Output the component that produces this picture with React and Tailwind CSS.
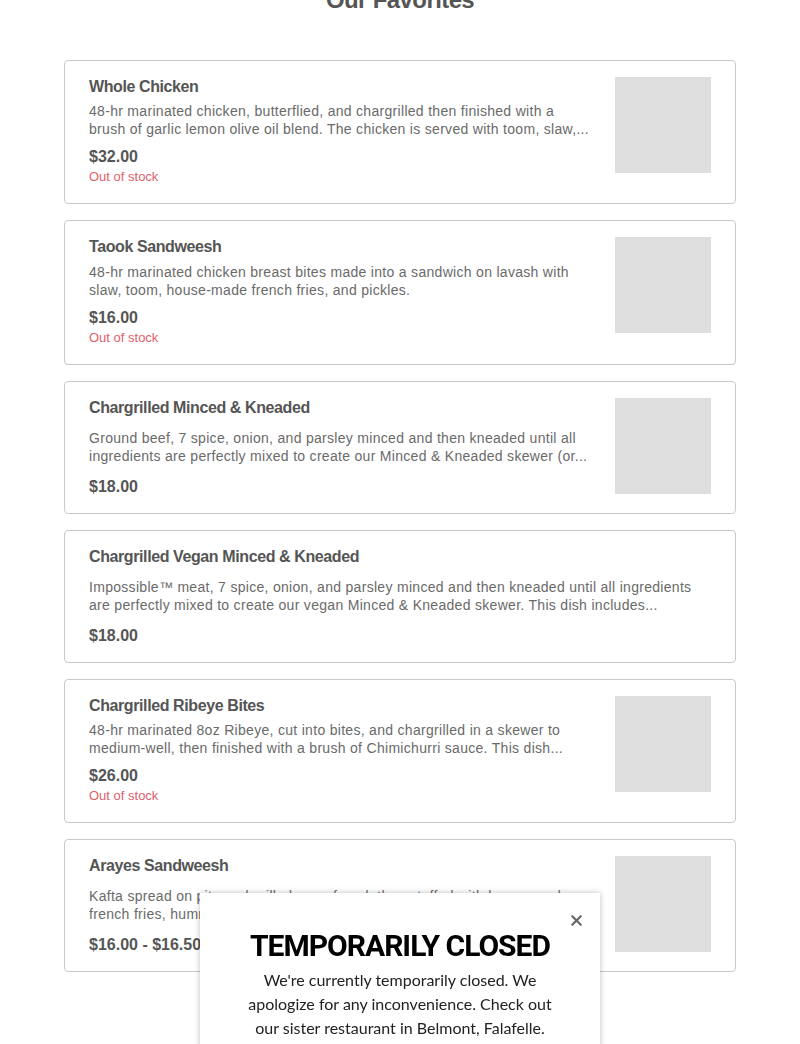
import React from 'react';
import { X } from 'lucide-react';

const items = [
  {
    name: 'Whole Chicken',
    lines: [
      '48-hr marinated chicken, butterflied, and chargrilled then finished with a',
      'brush of garlic lemon olive oil blend. The chicken is served with toom, slaw,...',
    ],
    price: '$32.00',
    outOfStock: true,
    image: true,
  },
  {
    name: 'Taook Sandweesh',
    lines: [
      '48-hr marinated chicken breast bites made into a sandwich on lavash with',
      'slaw, toom, house-made french fries, and pickles.',
    ],
    price: '$16.00',
    outOfStock: true,
    image: true,
    roomy: true,
  },
  {
    name: 'Chargrilled Minced & Kneaded',
    lines: [
      'Ground beef, 7 spice, onion, and parsley minced and then kneaded until all',
      'ingredients are perfectly mixed to create our Minced & Kneaded skewer (or...',
    ],
    price: '$18.00',
    image: true,
  },
  {
    name: 'Chargrilled Vegan Minced & Kneaded',
    lines: [
      'Impossible™ meat, 7 spice, onion, and parsley minced and then kneaded until all ingredients',
      'are perfectly mixed to create our vegan Minced & Kneaded skewer. This dish includes...',
    ],
    price: '$18.00',
    image: false,
  },
  {
    name: 'Chargrilled Ribeye Bites',
    lines: [
      '48-hr marinated 8oz Ribeye, cut into bites, and chargrilled in a skewer to',
      'medium-well, then finished with a brush of Chimichurri sauce. This dish...',
    ],
    price: '$26.00',
    outOfStock: true,
    image: true,
  },
  {
    name: 'Arayes Sandweesh',
    lines: [
      'Kafta spread on pita and grilled open faced, then stuffed with house-made',
      'french fries, hummus, pickles, and toom...',
    ],
    price: '$16.00 - $16.50',
    image: true,
  },
];

const MenuCard = ({ item }) => (
  <div className="flex gap-6 border border-[#c9c9c9] rounded-[4px] bg-white pl-6 pr-6 pt-4 pb-4">
    <div className="flex-1 min-w-0">
      <div className="text-[16px] leading-[20px] font-semibold tracking-[-0.4px] text-[#555]">{item.name}</div>
      <div
        className={`${item.outOfStock ? (item.roomy ? 'mt-[6px]' : 'mt-[5px]') : 'mt-[11px]'} text-[14px] leading-[18px] tracking-[0.3px] text-[#6a6a6a]`}
      >
        {item.lines.map((l, i) => (
          <div key={i} className="whitespace-nowrap">{l}</div>
        ))}
      </div>
      <div className={`${item.outOfStock ? 'mt-[9px]' : 'mt-[12px]'} text-[16px] leading-[20px] font-semibold text-[#555]`}>
        {item.price}
      </div>
      {item.outOfStock && (
        <div className="text-[13px] leading-[19px] text-[#e0606b] pb-[1px]">Out of stock</div>
      )}
    </div>
    {item.image && <div className="w-24 h-24 shrink-0 bg-[#dedede]" />}
  </div>
);

export default function App() {
  return (
    <div className="min-h-screen bg-white font-['Liberation_Sans',Arial,sans-serif]">
      <div className="w-[672px] mx-auto">
        <h2 className="mt-[-16px] mb-[44px] text-center text-[24px] leading-[32px] font-semibold tracking-[-0.6px] text-[#555]">
          Our Favorites
        </h2>
        <div className="flex flex-col gap-4">
          {items.map((it) => (
            <MenuCard key={it.name} item={it} />
          ))}
        </div>
        <div className="h-24" />
      </div>

      <div className="fixed left-[200px] top-[893px] w-[400px] h-[300px] bg-white shadow-[0_0_6px_rgba(0,0,0,0.25)] px-10 pt-[33px] text-center">
        <button className="absolute top-[19px] right-[15px] text-[#666]">
          <X size={17} strokeWidth={3} />
        </button>
        <div className="text-[30px] leading-[40px] font-bold text-black tracking-[-1px] font-['Roboto',sans-serif]">
          TEMPORARILY CLOSED
        </div>
        <p className="mt-[2px] text-[16px] leading-[24px] text-[#222] font-['Lato',sans-serif]">
          We're currently temporarily closed. We apologize for any inconvenience. Check out our sister restaurant in Belmont, Falafelle.
        </p>
      </div>
    </div>
  );
}
